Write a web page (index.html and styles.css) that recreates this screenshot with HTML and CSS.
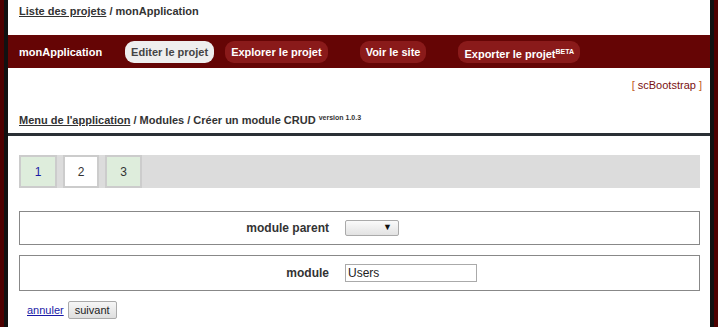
FILE: index.html
```html
<!DOCTYPE html>
<html lang="fr">

<head>
  <meta charset="UTF-8">
  <title>Créer un module CRUD</title>
  <link rel="stylesheet" href="styles.css">
</head>

<body>
  <div class="page">
    <div class="crumbs top">
      <a href="#">Liste des projets</a> / monApplication
    </div>

    <div class="menu">
      <span class="app">monApplication</span>
      <a class="pill active" href="#">Editer le projet</a>
      <a class="pill" href="#">Explorer le projet</a>
      <a class="pill far" href="#">Voir le site</a>
      <a class="pill far" href="#">Exporter le projet<sup>BETA</sup></a>
    </div>

    <div class="theme">[ <a href="#">scBootstrap</a> ]</div>

    <div class="crumbs sub">
      <a href="#">Menu de l'application</a> / Modules / Créer un module CRUD <sup>version 1.0.3</sup>
    </div>

    <div class="sep"></div>

    <div class="content">
      <div class="steps">
        <a class="step done" href="#">1</a>
        <span class="step current">2</span>
        <span class="step last">3</span>
      </div>

      <form class="form">
        <div class="row">
          <label class="label">module parent</label>
          <div class="field">
            <span class="select-wrap">
              <select class="select">
                <option></option>
              </select>
            </span>
          </div>
        </div>
        <div class="row">
          <label class="label">module</label>
          <div class="field">
            <input class="text" type="text" value="Users">
          </div>
        </div>
        <div class="actions">
          <a href="#">annuler</a>
          <button type="button" class="btn">suivant</button>
        </div>
      </form>
    </div>
  </div>
</body>

</html>
```

FILE: styles.css
```css
* {
  margin: 0;
  padding: 0;
  box-sizing: border-box;
}

html,
body {
  height: 100%;
}

body {
  background-color: #4e0000;
  padding: 0 4px;
  font-family: "Liberation Sans", Arial, sans-serif;
  font-size: 11px;
  color: #333;
}

.page {
  min-height: 100%;
  background-color: #fff;
  border-left: 4px solid #111;
  border-right: 4px solid #111;
}

.crumbs {
  font-weight: bold;
  padding: 0 11px;
}

.crumbs a {
  color: #333;
}

.crumbs.top {
  height: 35px;
  padding-top: 5px;
}

.menu {
  display: flex;
  align-items: center;
  height: 33px;
  padding: 0 11px;
  background-color: #650505;
  gap: 11px;
}

.menu .app {
  color: #fff;
  font-weight: bold;
  margin-right: 12px;
}

.menu .pill {
  display: block;
  height: 22px;
  line-height: 22px;
  padding: 0 6px;
  border-radius: 9px;
  background-color: #8a1a1a;
  color: #fff;
  font-weight: bold;
  text-decoration: none;
}

.menu .pill.far {
  margin-left: 21px;
}

.menu .pill.active {
  background-color: #eee;
  color: #444;
}

.menu .pill sup {
  font-size: 7px;
  vertical-align: 4px;
}

.theme {
  text-align: right;
  padding: 11px 8px 0 0;
  height: 44px;
  color: #c0601a;
  font-size: 11px;
}

.theme a {
  color: #7a1010;
  text-decoration: none;
}

.crumbs.sub {
  height: 21px;
  padding-top: 2px;
}

.crumbs.sub sup {
  font-size: 7px;
  vertical-align: 4px;
}

.sep {
  height: 3px;
  background-color: #2a3035;
}

.content {
  padding: 19px 10px 8px 11px;
}

.steps {
  display: flex;
  gap: 6px;
  height: 33px;
  background-color: #dcdcdc;
}

.step {
  display: flex;
  align-items: center;
  justify-content: center;
  width: 38px;
  border: 2px solid #ccc;
  background-color: #deeddc;
  color: #333;
  font-size: 12px;
  text-decoration: none;
}

.step.done {
  color: #1a1aa6;
}

.step.current {
  width: 36px;
  background-color: #fff;
}

.step.last {
  width: 37px;
}

.form {
  margin-top: 23px;
}

.row {
  display: grid;
  grid-template-columns: 309px 1fr;
  column-gap: 16px;
  align-items: center;
  height: 34px;
  border: 1px solid #888;
  margin-bottom: 10px;
}

.row + .row {
  height: 36px;
}

.label {
  text-align: right;
  font-weight: bold;
  font-size: 12px;
}

.select-wrap {
  position: relative;
  display: inline-block;
  vertical-align: middle;
}

.select-wrap::after {
  content: "▼";
  position: absolute;
  right: 7px;
  top: 2px;
  font-size: 9px;
  color: #111;
  pointer-events: none;
}

.select {
  display: block;
  width: 54px;
  height: 16px;
  appearance: none;
  -webkit-appearance: none;
  border: 1px solid #aaa;
  border-radius: 2px;
  background: linear-gradient(#fafafa, #e2e2e2);
  font-family: "Liberation Sans", Arial, sans-serif;
  font-size: 11px;
}

.text {
  width: 132px;
  height: 18px;
  padding: 1px 2px;
  border: 1px solid #aaa;
  font-family: "Liberation Sans", Arial, sans-serif;
  font-size: 12px;
  color: #222;
}

.actions {
  display: flex;
  align-items: center;
  gap: 4px;
  padding-left: 8px;
  margin-top: 1px;
}

.actions a {
  color: #1a1aa6;
  font-size: 11px;
}

.btn {
  height: 18px;
  padding: 0 6px;
  font-family: "Liberation Sans", Arial, sans-serif;
  font-size: 11px;
  color: #222;
  border: 1px solid #aaa;
  border-radius: 2px;
  background: linear-gradient(#f6f6f6, #dedede);
}
```
